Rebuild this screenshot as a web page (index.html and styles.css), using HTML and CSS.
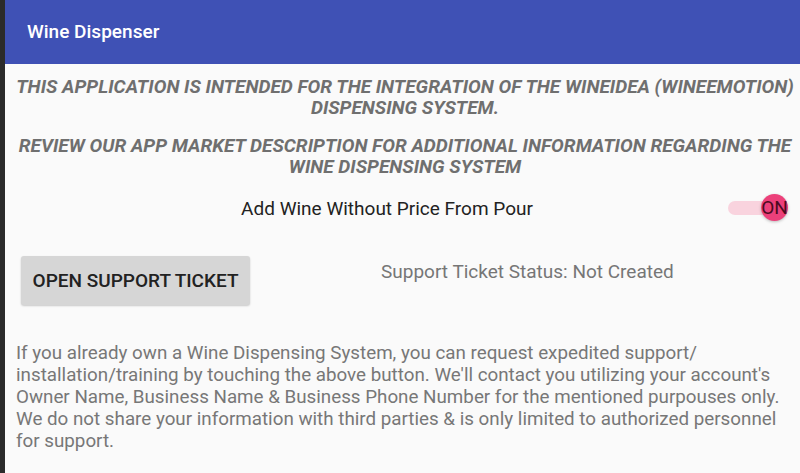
FILE: index.html
```html
<!DOCTYPE html>
<html lang="en">
<head>
  <meta charset="UTF-8" />
  <meta name="viewport" content="width=device-width, initial-scale=1.0"/>
  <title>Wine Dispenser</title>
  <link rel="stylesheet" href="styles.css">
</head>
<body>
  <div class="edge"></div>
  <div class="app">
    <div class="toolbar">Wine Dispenser</div>

    <div class="content">
      <p class="notice">THIS APPLICATION IS INTENDED FOR THE INTEGRATION OF THE WINEIDEA (WINEEMOTION) DISPENSING SYSTEM.</p>
      <p class="notice second">REVIEW OUR APP MARKET DESCRIPTION FOR ADDITIONAL INFORMATION REGARDING THE WINE DISPENSING SYSTEM</p>

      <div class="switch-row">
        <span class="switch-label">Add Wine Without Price From Pour</span>
        <div class="switch">
          <div class="track"></div>
          <div class="thumb">ON</div>
        </div>
      </div>

      <div class="ticket-row">
        <button class="ticket-btn">OPEN SUPPORT TICKET</button>
        <span class="ticket-status">Support Ticket Status: Not Created</span>
      </div>

      <p class="info">If you already own a Wine Dispensing System, you can request expedited support/ installation/training by touching the above button. We'll contact you utilizing your account's Owner Name, Business Name &amp; Business Phone Number for the mentioned purpouses only. We do not share your information with third parties &amp; is only limited to authorized personnel for support.</p>
    </div>
  </div>
</body>
</html>
```

FILE: styles.css
```css
body {
  margin: 0;
  display: flex;
  height: 473px;
  overflow: hidden;
  font-family: Roboto, "Noto Sans", sans-serif;
  background: #fafafa;
}
.edge {
  width: 5px;
  background: #2b2b2b;
  flex-shrink: 0;
}
.app {
  flex: 1;
  display: flex;
  flex-direction: column;
}
.toolbar {
  height: 64px;
  background: #3f51b5;
  color: #fff;
  font-family: "Roboto Medium", Roboto, sans-serif;
  font-size: 19px;
  font-weight: 500;
  display: flex;
  align-items: center;
  padding-left: 22px;
  padding-bottom: 2px;
  box-sizing: border-box;
}
.content {
  padding: 12px 6px 0 11px;
}
.notice {
  margin: 0;
  text-align: center;
  font-style: italic;
  font-weight: bold;
  font-size: 19px;
  line-height: 21px;
  color: #6f6f6f;
}
.notice.second {
  margin-top: 17px;
}
.switch-row {
  display: flex;
  align-items: center;
  margin-top: 17px;
  height: 28px;
}
.switch-label {
  flex: 1;
  text-align: center;
  font-size: 19px;
  color: #222;
  padding-left: 30px;
}
.switch {
  position: relative;
  width: 62px;
  height: 28px;
  margin-right: 4px;
}
.track {
  position: absolute;
  left: 0;
  right: 14px;
  top: 7px;
  height: 14px;
  border-radius: 7px;
  background: #f9d3de;
}
.thumb {
  position: absolute;
  right: 2px;
  top: 0;
  width: 27px;
  height: 27px;
  border-radius: 50%;
  background: #ec407a;
  box-shadow: 0 1px 3px rgba(0,0,0,0.25);
  color: #4a0a20;
  font-size: 19px;
  line-height: 27px;
  text-align: center;
}
.ticket-row {
  display: flex;
  align-items: flex-start;
  margin-top: 34px;
}
.ticket-btn {
  width: 229px;
  height: 49px;
  margin-left: 5px;
  background: #d6d6d6;
  border: none;
  border-radius: 3px;
  box-shadow: 0 1px 2px rgba(0,0,0,0.2);
  font-family: "Roboto Medium", Roboto, sans-serif;
  font-size: 19px;
  font-weight: 500;
  color: #222;
  padding: 0;
}
.ticket-status {
  margin-left: 131px;
  margin-top: 4px;
  font-size: 19px;
  color: #767676;
}
.info {
  margin: 37px 0 0;
  font-size: 18.8px;
  line-height: 22px;
  color: #777;
}
```
